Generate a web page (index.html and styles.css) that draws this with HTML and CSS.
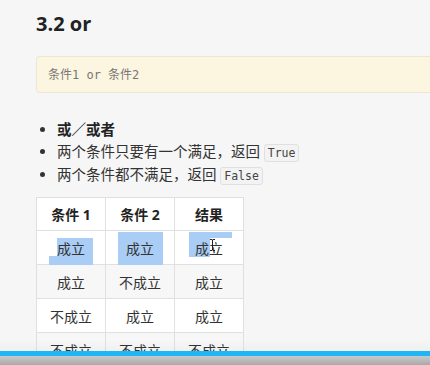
FILE: index.html
```html
<!DOCTYPE html>
<html lang="zh-CN">
<head>
    <meta charset="UTF-8">
    <meta name="viewport" content="width=device-width, initial-scale=1.0">
    <title>3.2 or</title>
    <link rel="stylesheet" href="styles.css">
</head>
<body>
    <div class="doc">
        <h2 class="title">3.2 or</h2>

        <pre class="code-block"><code>条件1 or 条件2</code></pre>

        <ul class="points">
            <li><strong>或／或者</strong></li>
            <li>两个条件只要有一个满足，返回 <code class="inline">True</code></li>
            <li>两个条件都不满足，返回 <code class="inline">False</code></li>
        </ul>

        <table class="truth">
            <thead>
                <tr>
                    <th>条件 1</th>
                    <th>条件 2</th>
                    <th>结果</th>
                </tr>
            </thead>
            <tbody>
                <tr>
                    <td class="cell">
                        <span class="mark mark-a1"></span>
                        <span class="mark mark-a2"></span>
                        <span class="txt">成立</span>
                    </td>
                    <td class="cell">
                        <span class="mark mark-b"></span>
                        <span class="txt">成立</span>
                    </td>
                    <td class="cell">
                        <span class="mark mark-c1"></span>
                        <span class="mark mark-c2"></span>
                        <span class="txt">成立</span>
                        <svg class="ibeam" width="7" height="12" viewBox="0 0 7 12">
                            <path d="M1 0.5h2l0.5 0.6 0.5-0.6h2M3.5 1v10M1 11.5h2l0.5-0.6 0.5 0.6h2" fill="none" stroke="#222" stroke-width="1"/>
                        </svg>
                    </td>
                </tr>
                <tr>
                    <td>成立</td>
                    <td>不成立</td>
                    <td>成立</td>
                </tr>
                <tr>
                    <td>不成立</td>
                    <td>成立</td>
                    <td>成立</td>
                </tr>
                <tr>
                    <td>不成立</td>
                    <td>不成立</td>
                    <td>不成立</td>
                </tr>
            </tbody>
        </table>
    </div>

    <div class="player">
        <div class="progress"></div>
        <div class="controls"></div>
    </div>
</body>
</html>
```

FILE: styles.css
```css
* {
    margin: 0;
    padding: 0;
    box-sizing: border-box;
}

html, body {
    height: 100%;
    overflow: hidden;
}

body {
    font-family: "Open Sans", "Noto Sans CJK SC", sans-serif;
    background: #f6f6f6;
    color: #333;
    position: relative;
}

.doc {
    padding: 10px 0 0 36px;
}

.title {
    font-size: 20px;
    font-weight: 700;
    color: #222;
    line-height: 28px;
    height: 28px;
}

.code-block {
    margin-top: 18px;
    height: 37px;
    background: #fcf5e0;
    border: 1px solid #ede6d6;
    border-right: none;
    border-radius: 4px 0 0 4px;
    padding: 1px 0 0 11px;
    font-family: "DejaVu Sans Mono", "Noto Sans CJK SC", monospace;
    font-size: 12px;
    line-height: 35px;
    color: #777;
}

.points {
    margin-top: 26px;
    padding-left: 21px;
    font-size: 14.5px;
    line-height: 22px;
    color: #333;
}

.points strong {
    color: #222;
}

.inline {
    font-family: "DejaVu Sans Mono", monospace;
    font-size: 11.5px;
    background: #f3f3f3;
    border: 1px solid #e0e0e0;
    border-radius: 3px;
    padding: 1px 3px;
    color: #444;
}

.truth {
    margin-top: 10px;
    border-collapse: collapse;
    font-size: 14px;
    color: #333;
}

.truth th,
.truth td {
    border: 1px solid #e0e0e0;
    width: 69px;
    text-align: center;
    vertical-align: middle;
}

.truth th {
    height: 33px;
    font-weight: 700;
    color: #222;
    background: #fff;
}

.truth td {
    height: 34px;
    background: #fff;
}

.truth tbody tr:nth-child(even) td {
    background: #f7f7f7;
}

/* selected text in the first data row */
.cell {
    position: relative;
}

.txt {
    position: relative;
}

.mark {
    position: absolute;
    background: #a9cdf5;
}

.mark-a1 { left: 20px; top: 7px; width: 36px; height: 27px; }
.mark-a2 { left: 12px; top: 25px; width: 10px; height: 9px; }
.mark-b  { left: 12px; top: 1px; width: 45px; height: 33px; }
.mark-c1 { left: 14px; top: 1px; width: 43px; height: 6px; }
.mark-c2 { left: 14px; top: 6px; width: 21px; height: 20px; }

.ibeam {
    position: absolute;
    left: 34px;
    top: 8px;
}

/* video player strip along the bottom */
.player {
    position: absolute;
    left: 0;
    right: 0;
    bottom: 0;
    height: 26px;
    background: linear-gradient(to bottom, rgba(0, 0, 0, 0), rgba(0, 0, 0, 0.06));
    display: flex;
    flex-direction: column;
    justify-content: flex-end;
}

.progress {
    height: 5px;
    background: #1eb6f4;
}

.controls {
    height: 9px;
    background: linear-gradient(to bottom, #c9c9c9, #a9a9a9);
}
```
